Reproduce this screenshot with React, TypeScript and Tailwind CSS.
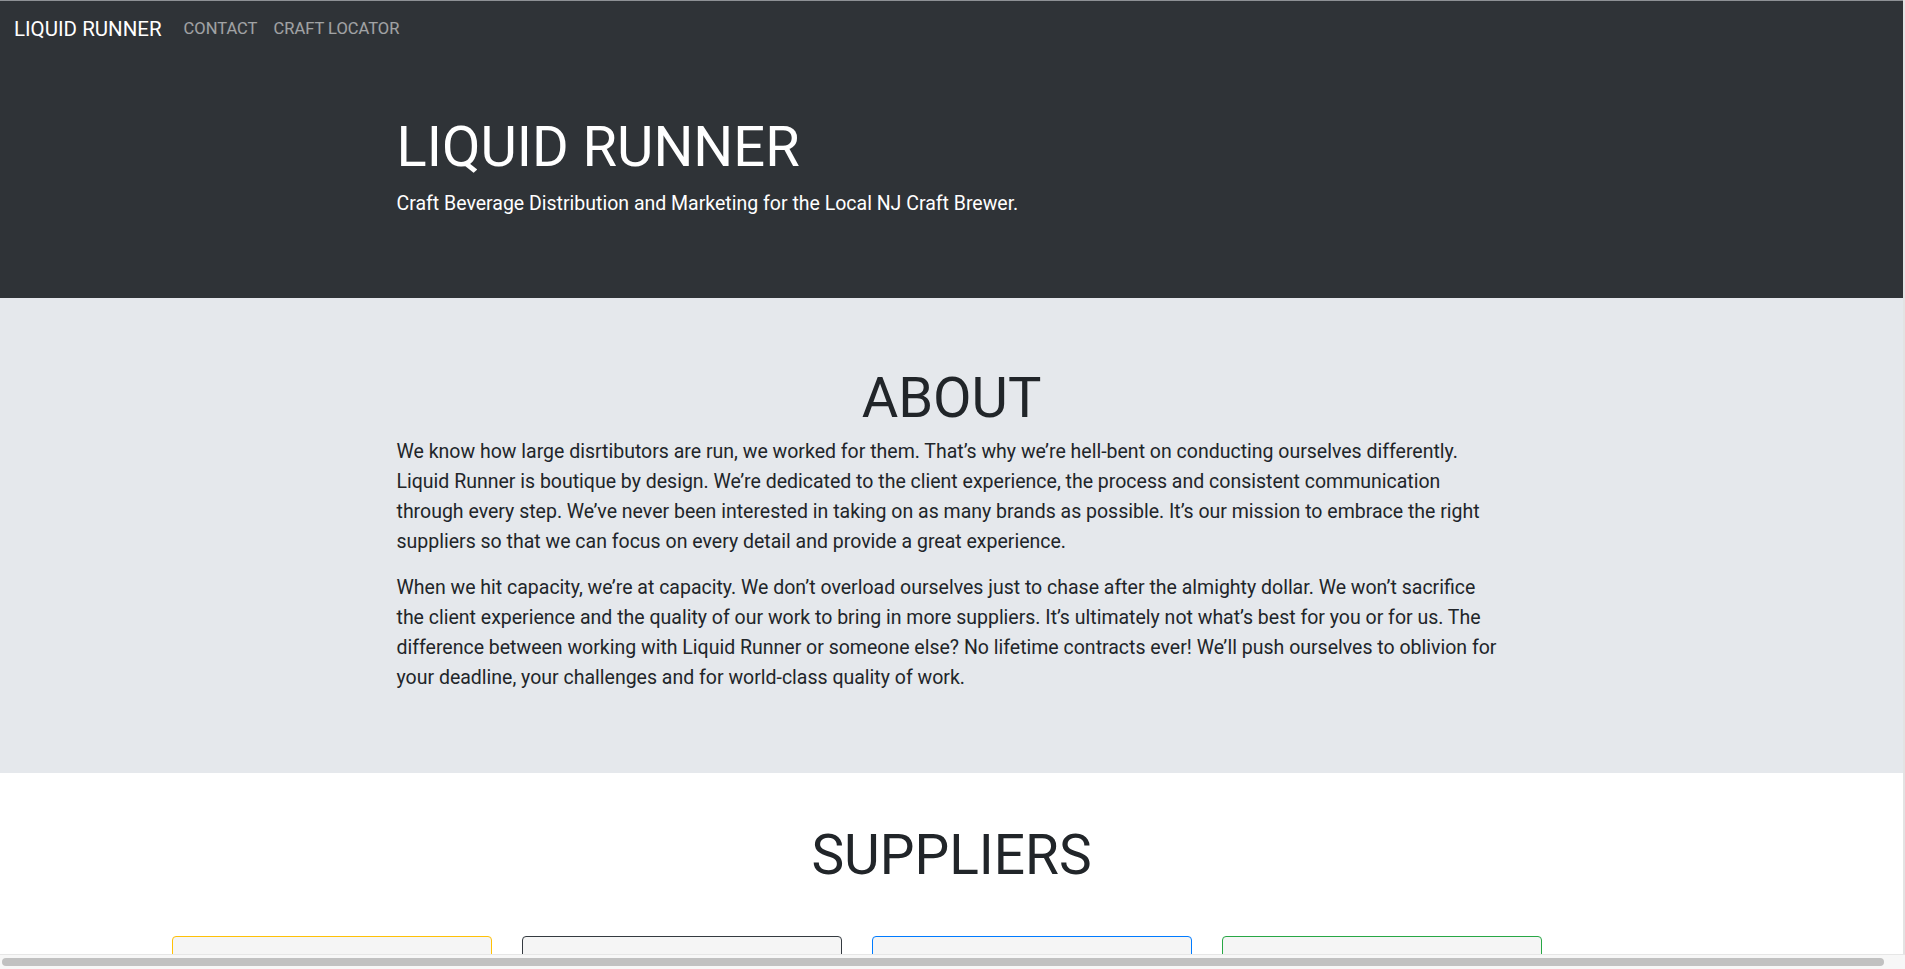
export default function App() {
  const suppliers = [
    { name: "warning", border: "border-[#ffc107]" },
    { name: "dark", border: "border-[#343a40]" },
    { name: "primary", border: "border-[#007bff]" },
    { name: "success", border: "border-[#28a745]" },
  ];

  return (
    <div className="flex h-[969px] w-[1905px] flex-col overflow-hidden bg-[#f6f6f6] font-['Roboto',sans-serif] text-[#212529]">
      <div className="flex min-h-0 flex-1">
        <div className="flex w-[1903px] flex-col overflow-hidden border-t border-[#8e9195] bg-white">
          {/* Header + hero */}
          <header className="bg-[#2f3337]">
            <nav className="flex items-center px-[14px] py-[13px]">
              <span className="mr-[22px] text-[20.5px] leading-[30px] text-white">LIQUID RUNNER</span>
              <span className="text-[16.5px] leading-6 text-white/55">CONTACT</span>
              <span className="ml-[16px] text-[16.5px] leading-6 text-white/55">CRAFT LOCATOR</span>
            </nav>
            <div className="mx-auto w-[1110px] pt-[57px] pb-[79px]">
              <h1 className="text-[56px] leading-[67px] font-normal text-white">LIQUID RUNNER</h1>
              <p className="mt-2 text-[19.5px] leading-[30px] text-white">
                Craft Beverage Distribution and Marketing for the Local NJ Craft Brewer.
              </p>
            </div>
          </header>

          {/* About */}
          <section className="bg-[#e5e8ec] pt-16 pb-[80px]">
            <div className="mx-auto w-[1110px]">
              <h2 className="mb-[3px] text-center text-[56px] leading-[72px] font-normal">ABOUT</h2>
              <p className="text-[19.5px] leading-[30px]">
                We know how large disrtibutors are run, we worked for them. That’s why we’re hell-bent on conducting ourselves differently. Liquid Runner is boutique by design. We’re dedicated to the client experience, the process and consistent communication through every step. We’ve never been interested in taking on as many brands as possible. It’s our mission to embrace the right suppliers so that we can focus on every detail and provide a great experience.
              </p>
              <p className="mt-4 text-[19.5px] leading-[30px]">
                When we hit capacity, we’re at capacity. We don’t overload ourselves just to chase after the almighty dollar. We won’t sacrifice the client experience and the quality of our work to bring in more suppliers. It’s ultimately not what’s best for you or for us. The difference between working with Liquid Runner or someone else? No lifetime contracts ever! We’ll push ourselves to oblivion for your deadline, your challenges and for world-class quality of work.
              </p>
            </div>
          </section>

          {/* Suppliers */}
          <section className="pt-[49px]">
            <h2 className="text-center text-[55px] leading-[67px] font-normal">SUPPLIERS</h2>
            <div className="mt-[47px] flex gap-[30px] pl-[172px]">
              {suppliers.map((s) => (
                <div key={s.name} className={`h-[120px] w-[320px] rounded border bg-[#f5f5f5] ${s.border}`}></div>
              ))}
            </div>
          </section>
        </div>
        <div className="w-[2px] bg-[#e3e3e3]"></div>
      </div>

      {/* horizontal scrollbar */}
      <div className="flex h-[15px] items-center border-t border-[#e6e6e6] bg-[#f7f7f7] pl-[2px]">
        <div className="h-[8px] w-[1882px] rounded-full bg-[#c1c1c1]"></div>
      </div>
    </div>
  );
}
